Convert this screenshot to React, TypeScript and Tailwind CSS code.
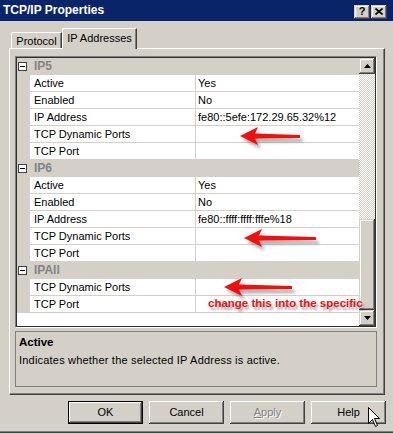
import React from "react";

const raisedInner =
  "shadow-[inset_-1px_-1px_0_#404040,inset_1px_1px_0_#d4d0c8,inset_-2px_-2px_0_#808080,inset_2px_2px_0_#ffffff]";
const raisedBtn =
  "shadow-[inset_-1px_-1px_0_#404040,inset_1px_1px_0_#ffffff,inset_-2px_-2px_0_#808080]";

function Category({ name }: { name: string }) {
  return (
    <div className="h-[17px] bg-[#d4d0c8] flex items-center shrink-0">
      <div className="ml-[1px] w-[9px] h-[9px] border border-[#404040] bg-white flex items-center justify-center">
        <div className="w-[5px] h-px bg-black" />
      </div>
      <span className="ml-[7px] font-bold text-[12px] text-[#838383]">{name}</span>
    </div>
  );
}

function Row({ label, value }: { label: string; value?: string }) {
  return (
    <div className="h-[17px] flex shrink-0">
      <div className="w-[13px] bg-[#d4d0c8]" />
      <div className="w-[166px] border-b border-r border-[#d4d0c8] bg-white flex items-center pl-[4px] whitespace-nowrap">
        {label}
      </div>
      <div className="flex-1 border-b border-[#d4d0c8] bg-white flex items-center pl-[2px] whitespace-nowrap">
        {value ?? ""}
      </div>
    </div>
  );
}

function Arrow({ className, len, id }: { className: string; len: number; id: string }) {
  const pts = `0,10 18,1 15,7.5 ${len},9 ${len},12 15,12.5 18,19`;
  return (
    <svg className={"absolute pointer-events-none " + className} width={len + 10} height={30}>
      <defs>
        <filter id={id} x="-20%" y="-50%" width="140%" height="200%">
          <feGaussianBlur stdDeviation="1.8" />
        </filter>
      </defs>
      <polygon points={pts} transform="translate(3,4)" fill="#6a6a6a" opacity="0.55" filter={`url(#${id})`} />
      <polygon points={pts} fill="#f01010" />
    </svg>
  );
}

export default function App() {
  return (
    <div className="relative w-[393px] h-[434px] overflow-hidden bg-[#d4d0c8] font-['Liberation_Sans',Arial,sans-serif] text-[11px] leading-[13px] text-black">
      {/* Title bar */}
      <div className="h-[21px] bg-[#0a246a] flex items-center pl-[3px] pr-[6px]">
        <span className="font-bold text-white text-[12px]">TCP/IP Properties</span>
        <div className="ml-auto mt-[2px] flex gap-[1px]">
          <div className={"w-[16px] h-[14px] bg-[#d4d0c8] flex items-center justify-center font-bold text-[11px] " + raisedInner}>
            <span className="-mt-px">?</span>
          </div>
          <div className={"w-[16px] h-[14px] bg-[#d4d0c8] flex items-center justify-center " + raisedInner}>
            <svg width="8" height="7" viewBox="0 0 8 7">
              <path d="M0.5 0.5 L7.5 6.5 M7.5 0.5 L0.5 6.5" stroke="#000" strokeWidth="1.6" />
            </svg>
          </div>
        </div>
      </div>

      {/* Tabs */}
      <div className="h-[27px] flex items-end pl-[11px]">
        <div className="h-[16px] w-[51px] border-t border-l border-white border-r border-r-[#404040] rounded-tl-[2px] flex items-center justify-center shadow-[inset_-1px_0_0_#808080]">
          <span className="mt-[2px]">Protocol</span>
        </div>
        <div className="relative z-10 -mb-px h-[21px] w-[75px] bg-[#d4d0c8] border-t border-l border-white border-r border-r-[#404040] rounded-tl-[2px] flex items-start justify-center pt-[3px] shadow-[inset_-1px_0_0_#808080]">
          IP Addresses
        </div>
      </div>

      {/* Tab panel */}
      <div className="ml-[9px] w-[376px] h-[347px] border-t border-l border-white border-r border-b border-r-[#404040] border-b-[#404040] shadow-[inset_-1px_-1px_0_#808080] pl-[5px] pt-[7px]">
        {/* Property grid */}
        <div className="w-[362px] h-[272px] border-t border-l border-[#808080] border-r border-b border-r-white border-b-white">
          <div className="w-full h-full border border-[#303030] flex bg-white">
            <div className="flex-1 flex flex-col overflow-hidden">
              <Category name="IP5" />
              <Row label="Active" value="Yes" />
              <Row label="Enabled" value="No" />
              <Row label="IP Address" value="fe80::5efe:172.29.65.32%12" />
              <Row label="TCP Dynamic Ports" />
              <Row label="TCP Port" />
              <Category name="IP6" />
              <Row label="Active" value="Yes" />
              <Row label="Enabled" value="No" />
              <Row label="IP Address" value="fe80::ffff:ffff:fffe%18" />
              <Row label="TCP Dynamic Ports" />
              <Row label="TCP Port" />
              <Category name="IPAll" />
              <Row label="TCP Dynamic Ports" />
              <Row label="TCP Port" />
            </div>
            {/* Scrollbar */}
            <div className="w-[16px] flex flex-col">
              <div className={"h-[16px] bg-[#d4d0c8] flex items-center justify-center " + raisedInner}>
                <svg width="7" height="4" viewBox="0 0 7 4">
                  <path d="M3.5 0 L7 4 L0 4 Z" fill="#000" />
                </svg>
              </div>
              <div className="flex-1 bg-[repeating-conic-gradient(#ffffff_0_25%,#d4d0c8_0_50%)] bg-[length:2px_2px]" />
              <div className={"h-[91px] bg-[#d4d0c8] " + raisedInner} />
              <div className={"h-[16px] bg-[#d4d0c8] flex items-center justify-center " + raisedInner}>
                <svg width="7" height="4" viewBox="0 0 7 4">
                  <path d="M0 0 L7 0 L3.5 4 Z" fill="#000" />
                </svg>
              </div>
            </div>
          </div>
        </div>

        {/* Description */}
        <div className="mt-[3px] w-[362px] h-[56px] border border-[#808080] pl-[3px] pt-[4px]">
          <div className="font-bold text-[11.5px]">Active</div>
          <div className="mt-[5px] tracking-[0.2px]">Indicates whether the selected IP Address is active.</div>
        </div>
      </div>

      {/* Buttons */}
      <div className="mt-[6px] flex justify-end gap-[6px] pr-[7px]">
        <div className="w-[75px] h-[23px] border border-black">
          <div className={"w-full h-full flex items-center justify-center " + raisedBtn}>OK</div>
        </div>
        <div className={"w-[75px] h-[23px] flex items-center justify-center " + raisedBtn}>Cancel</div>
        <div className={"w-[75px] h-[23px] flex items-center justify-center text-[#808080] [text-shadow:1px_1px_0_#ffffff] " + raisedBtn}>
          <span>
            <span className="underline">A</span>pply
          </span>
        </div>
        <div className={"w-[75px] h-[23px] flex items-center justify-center " + raisedBtn}>Help</div>
      </div>

      {/* Window bottom frame */}
      <div className="mt-[7px] h-px bg-[#808080]" />
      <div className="h-px bg-[#404040]" />

      {/* Annotations */}
      <Arrow className="left-[240px] top-[126px]" len={60} id="a1" />
      <Arrow className="left-[244px] top-[228px]" len={72} id="a2" />
      <Arrow className="left-[224px] top-[277px]" len={68} id="a3" />
      <div className="absolute left-[208px] top-[297px] font-bold text-[11.5px] text-[#ee1111] whitespace-nowrap font-['Liberation_Sans',Arial,sans-serif] [text-shadow:2px_3px_2px_rgba(0,0,0,0.35)]">
        change this into the specific
      </div>

      {/* Mouse cursor */}
      <svg className="absolute left-[368px] top-[407px]" width="13" height="21" viewBox="0 0 13 21">
        <path d="M0.5 0.5 L0.5 16.5 L4.5 12.5 L7.5 19.5 L9.5 18.5 L6.5 11.5 L11.5 11.5 Z" fill="#fff" stroke="#000" strokeWidth="1" strokeLinejoin="miter" />
      </svg>
    </div>
  );
}
